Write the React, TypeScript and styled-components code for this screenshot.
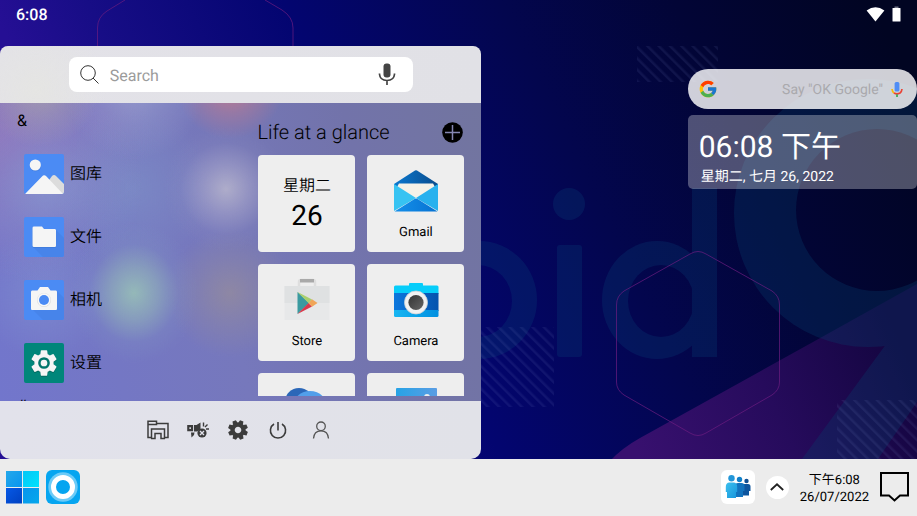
import React from 'react';
import styled, { createGlobalStyle } from 'styled-components';
import { FcGoogle } from 'react-icons/fc';
import { MdSettings } from 'react-icons/md';

const GlobalStyle = createGlobalStyle`
  * { box-sizing: border-box; }
  body {
    margin: 0;
    font-family: Roboto, "Noto Sans CJK SC", sans-serif;
    text-rendering: geometricPrecision;
    color: #000;
  }
  button, input { font: inherit; color: inherit; text-rendering: inherit; }
  button { border: 0; padding: 0; background: none; cursor: pointer; }
  svg { display: block; }
`;

const Desktop = styled.div`
  position: relative;
  display: flex;
  flex-direction: column;
  height: 100vh;
  overflow: hidden;
  background: #04054f;
`;

const WallpaperLayer = styled.div`
  position: absolute;
  inset: 0;
  svg { width: 100%; height: 100%; }
`;

const StatusBar = styled.header`
  position: relative;
  display: flex;
  justify-content: space-between;
  align-items: center;
  height: 28px;
  padding: 0 16px;
  color: #fff;
  font-size: 16px;
  font-weight: 500;
`;

const StatusIcons = styled.div`
  display: flex;
  align-items: center;
  gap: 7px;
`;

const Workspace = styled.main`
  position: relative;
  flex: 1;
  min-height: 0;
  display: flex;
  justify-content: space-between;
  padding-top: 18px;
`;

const StartMenu = styled.section`
  display: flex;
  flex-direction: column;
  width: 52.5%;
  min-width: 400px;
  border-radius: 8px 8px 10px 10px;
  overflow: hidden;
`;

const MenuHeader = styled.div`
  display: flex;
  justify-content: center;
  padding: 11px 16px;
  background:
    radial-gradient(circle at 36px 44px, #e5e5e3 0, transparent 70px),
    linear-gradient(90deg, #e3e2e8, #e1e1e6);
`;

const SearchBox = styled.label`
  display: flex;
  align-items: center;
  width: 344px;
  height: 35px;
  padding: 0 17px 0 11px;
  border-radius: 8px;
  background: #fff;
`;

const SearchInput = styled.input`
  flex: 1;
  min-width: 0;
  margin-left: 10px;
  padding: 2px 0 0;
  border: 0;
  outline: 0;
  background: none;
  font-size: 16px;
  &::placeholder { color: #9b9b9b; opacity: 1; }
`;

const MenuBody = styled.div`
  flex: 1;
  min-height: 0;
  display: flex;
  justify-content: space-between;
  background:
    radial-gradient(circle at 40px -16px, rgba(176, 170, 168, 0.7) 0, rgba(176, 170, 168, 0.3) 32px, rgba(176, 170, 168, 0) 60px),
    radial-gradient(circle at 134px -14px, rgba(160, 165, 208, 0.7) 0, rgba(160, 165, 208, 0.3) 36px, rgba(160, 165, 208, 0) 70px),
    radial-gradient(circle at 230px -18px, rgba(210, 124, 136, 0.85) 0, rgba(200, 124, 140, 0.4) 28px, rgba(200, 124, 140, 0) 54px),
    radial-gradient(circle at 226px 86px, rgba(180, 178, 204, 0.9) 0, rgba(174, 172, 204, 0.5) 24px, rgba(150, 150, 196, 0.15) 46px, rgba(150, 150, 196, 0) 62px),
    radial-gradient(ellipse 64px 70px at 134px 190px, rgba(150, 188, 184, 0.95) 0, rgba(146, 180, 186, 0.6) 38%, rgba(132, 156, 196, 0.2) 70%, rgba(132, 156, 196, 0) 100%),
    radial-gradient(circle at 230px 190px, rgba(146, 138, 160, 0.85) 0, rgba(146, 138, 160, 0.4) 32px, rgba(146, 138, 160, 0) 64px),
    radial-gradient(circle at 46px 84px, rgba(136, 160, 212, 0.6) 0, rgba(136, 160, 212, 0.2) 48px, rgba(136, 160, 212, 0) 96px),
    radial-gradient(circle at 134px 86px, rgba(126, 146, 200, 0.6) 0, rgba(126, 146, 200, 0) 80px),
    radial-gradient(circle at 44px 192px, rgba(132, 150, 212, 0.5) 0, rgba(132, 150, 212, 0) 64px),
    radial-gradient(circle at 0 30px, rgba(150, 118, 186, 0.8) 0, rgba(150, 118, 186, 0) 150px),
    linear-gradient(75deg, #7276cc 0%, #7678bc 45%, #7273aa 75%, #72759f 100%);
`;

const AppList = styled.div`
  flex: 1;
  min-width: 0;
  overflow: hidden;
`;

const GroupLabel = styled.h2`
  margin: 0;
  padding-left: 17px;
  line-height: 36px;
  font-size: 16px;
  font-weight: 400;
`;

const AppGroup = styled.ul`
  display: flex;
  flex-direction: column;
  gap: 23px;
  margin: 0;
  padding: 15px 24px 5px;
  list-style: none;
`;

const AppEntry = styled.button`
  display: flex;
  align-items: center;
  gap: 6px;
  font-size: 16px;
  font-weight: 350;
  line-height: 40px;
`;

const GlanceSection = styled.section`
  display: flex;
  flex-direction: column;
  width: 224px;
  padding: 14px 18px 5px 0;
`;

const GlanceHeader = styled.div`
  display: flex;
  align-items: center;
  justify-content: space-between;
  flex: none;
  height: 30px;
  margin-bottom: 8px;
`;

const GlanceTitle = styled.h2`
  margin: 0;
  font-size: 20px;
  font-weight: 350;
`;

const TileGrid = styled.div`
  flex: 1;
  min-height: 0;
  display: grid;
  grid-template-columns: 1fr 1fr;
  grid-auto-rows: 97px;
  gap: 12px;
  margin: 0 -1px 0 1px;
  overflow: hidden;
`;

const Tile = styled.button`
  display: flex;
  flex-direction: column;
  align-items: center;
  justify-content: flex-start;
  padding-top: 13px;
  border-radius: 4px;
  background: #eee;
  font-size: 13px;
`;

const TileLabel = styled.span`
  margin-top: 11px;
  line-height: 16px;
`;

const TileWeekday = styled.span`
  margin-top: 6px;
  line-height: 24px;
  font-size: 16px;
  font-weight: 350;
`;

const TileDay = styled.span`
  line-height: 36px;
  font-size: 28px;
  font-weight: 400;
`;

const MenuFooter = styled.nav`
  display: flex;
  align-items: center;
  gap: 18px;
  height: 58px;
  padding-left: 147px;
  color: #3c3c3c;
  background: linear-gradient(90deg, #e2e2eb, #e1e2e8);
`;

const FooterButton = styled.button<{ $wide?: boolean }>`
  display: flex;
  justify-content: center;
  width: ${(p) => (p.$wide ? 28 : 22)}px;
`;

const Widgets = styled.aside`
  display: flex;
  flex-direction: column;
  gap: 6px;
  width: 25%;
  min-width: 210px;
  padding-top: 23px;
`;

const GooglePill = styled.label`
  display: flex;
  align-items: center;
  height: 40px;
  padding: 0 14px 0 10px;
  border-radius: 20px;
  background: rgba(255, 255, 255, 0.81);
`;

const GoogleInput = styled.input`
  flex: 1;
  min-width: 0;
  padding: 2px 8px 0 0;
  border: 0;
  outline: 0;
  background: none;
  font-size: 14px;
  text-align: right;
  &::placeholder { color: #aaa9ad; opacity: 1; }
`;

const ClockCard = styled.div`
  height: 74px;
  padding: 13px 11px 0;
  border-radius: 5px;
  color: #fff;
  background: rgba(255, 255, 255, 0.3);
`;

const ClockTime = styled.div`
  line-height: 40px;
  font-size: 30px;
  font-weight: 400;
`;

const ClockDate = styled.div`
  padding-left: 2px;
  line-height: 18px;
  font-size: 14px;
`;

const Taskbar = styled.footer`
  position: relative;
  display: flex;
  align-items: center;
  justify-content: space-between;
  flex: none;
  height: 57px;
  padding: 0 8px 1px 6px;
  background: #ececec;
`;

const TaskGroup = styled.div<{ $gap: number }>`
  display: flex;
  align-items: center;
  gap: ${(p) => p.$gap}px;
`;

const WhiteButton = styled.button<{ $size: number; $radius: number }>`
  display: flex;
  align-items: center;
  justify-content: center;
  width: ${(p) => p.$size}px;
  height: ${(p) => p.$size}px;
  border-radius: ${(p) => p.$radius}px;
  background: #fff;
`;

const TaskClock = styled.div`
  padding-top: 3px;
  text-align: center;
  font-size: 13px;
  line-height: 17px;
`;

const Wallpaper = () => (
  <svg viewBox="0 0 917 516" preserveAspectRatio="xMidYMid slice" aria-hidden="true">
    <defs>
      <linearGradient id="base" gradientUnits="userSpaceOnUse" x1="0" y1="230" x2="800" y2="-150">
        <stop offset="0.1" stopColor="#250f94" />
        <stop offset="0.2" stopColor="#170d86" />
        <stop offset="0.4" stopColor="#030570" />
        <stop offset="0.62" stopColor="#03064e" />
        <stop offset="0.8" stopColor="#020536" />
        <stop offset="1" stopColor="#010522" />
      </linearGradient>
      <linearGradient id="beam" gradientUnits="userSpaceOnUse" x1="640" y1="459" x2="900" y2="340">
        <stop offset="0" stopColor="#38106f" />
        <stop offset="0.5" stopColor="#260b5c" />
        <stop offset="1" stopColor="#13053f" />
      </linearGradient>
      <pattern id="hatch" width="8" height="8" patternUnits="userSpaceOnUse" patternTransform="rotate(-45)">
        <rect width="2.500" height="8" fill="#7f8fd0" />
      </pattern>
      <mask id="nine">
        <circle cx="868" cy="213" r="134" fill="#fff" />
        <path d="M884 347L917 300V402L878 459H802Z" fill="#fff" />
        <circle cx="877" cy="210" r="81" fill="#000" />
      </mask>
      <mask id="letters">
        <ellipse cx="479" cy="300" rx="58" ry="59" fill="#fff" />
        <ellipse cx="478" cy="301" rx="34" ry="36" fill="#000" />
        <ellipse cx="657" cy="300" rx="55" ry="59" fill="#fff" />
        <ellipse cx="661" cy="301" rx="33" ry="36" fill="#000" />
        <rect x="692" y="188" width="25" height="169" fill="#fff" />
        <rect x="557" y="245" width="25" height="112" rx="3" fill="#fff" />
        <circle cx="569" cy="204" r="16" fill="#fff" />
      </mask>
    </defs>
    <rect width="917" height="516" fill="url(#base)" />
    <path d="M610 461Q622 448 640 438L813 342L917 284V461Z" fill="url(#beam)" />
    <rect width="917" height="516" fill="#084078" opacity="0.28" mask="url(#letters)" />
    <rect width="917" height="516" fill="#06406e" opacity="0.3" mask="url(#nine)" />
    <g fill="none" stroke="#6c1d80" strokeOpacity="0.7" strokeWidth="1">
      <path d="M616.500 382V305Q616.500 296 624 291L690 254Q698 249 706 254L772 291Q779.500 296 779.500 305V382Q779.500 390 772 395L706 433Q698 438 690 433L624 395Q616.500 390 616.500 382Z" />
      <path d="M125 0L107 11Q97.500 17 97.500 28V60M265 0L282 10Q293 17 293 28V60" />
    </g>
    <g fill="url(#hatch)" opacity="0.11">
      <rect x="637" y="46" width="81" height="36" />
      <rect x="480" y="327" width="74" height="80" />
      <rect x="837" y="400" width="80" height="60" />
    </g>
  </svg>
);

const WifiIcon = () => (
  <svg width="19" height="15" viewBox="0 0 19 15" fill="#fff"><path d="M9.500 14.500L.6 3.600Q9.500-3.200 18.400 3.600Z" /></svg>
);
const BatteryIcon = () => (
  <svg width="9" height="16" viewBox="0 0 9 16" fill="#fff"><path d="M2.500 .5h4v1.500h-4z" opacity=".45" /><rect x=".5" y="2" width="8" height="13.500" rx=".6" /></svg>
);
const SearchIcon = () => (
  <svg width="20" height="20" viewBox="0 0 20 20" fill="none" stroke="#333" strokeWidth="1"><circle cx="8" cy="8" r="7.300" /><path d="M13 13l5.500 5.500" /></svg>
);
const MicIcon = () => (
  <svg width="18" height="23" viewBox="0 0 18 23"><rect x="5.500" y=".5" width="7" height="14" rx="3" fill="#444" /><path d="M1.500 10.500v.8Q2 17.500 9 17.500T16.500 11.300v-.8M9 17.500V22" fill="none" stroke="#444" strokeWidth="1.700" /></svg>
);
const GoogleMic = () => (
  <svg width="12" height="17" viewBox="0 0 12 17" fill="none" strokeWidth="1.700">
    <rect x="3.600" y="1" width="4.800" height="9.500" rx="1.500" fill="#4f8df5" />
    <path d="M1 8Q1.200 10.500 3 12" stroke="#f9b806" /><path d="M3 12Q6 13.700 9 12Q10.800 10.500 11 8" stroke="#ea4335" /><path d="M6 13.300V16" stroke="#34a853" />
  </svg>
);
const PlusIcon = () => (
  <svg width="21" height="21" viewBox="0 0 21 21"><circle cx="10.500" cy="10.500" r="10.300" fill="#000" /><path d="M10.500 3v15M3 10.500h15" stroke="#8586b2" strokeWidth="1.500" /></svg>
);

const GalleryIcon = () => (
  <svg width="40" height="40" viewBox="0 0 40 40">
    <defs><clipPath id="galleryClip"><rect width="40" height="40" rx="2" /></clipPath></defs>
    <g clipPath="url(#galleryClip)">
      <rect width="40" height="40" fill="#4b8bf4" />
      <circle cx="11.500" cy="11.700" r="5.600" fill="#3b78dc" /><circle cx="11.300" cy="11" r="5.600" fill="#f5f5f5" />
      <path d="M18 36L28 22Q30 20 32 22L40 30V40H20Z" fill="#dcdcdc" />
      <path d="M1 40L18 22.500Q20 20 22.500 22.500L39 40Z" fill="#f5f5f5" />
    </g>
  </svg>
);
const FilesIcon = () => (
  <svg width="40" height="40" viewBox="0 0 40 40">
    <rect width="40" height="40" rx="2" fill="#4b8bf4" />
    <path d="M9 30L32 13L40 21V38Q40 40 38 40H19Z" fill="#4784ea" />
    <path d="M10 10H18L20 12.500H31Q32 12.500 32 14V29Q32 30.500 31 30.500H10Q8.500 30.500 8.500 29V11.500Q8.500 10 10 10Z" fill="#3b74d0" />
    <path d="M10 9.600H18L20 12H31Q32 12 32 13.500V28.500Q32 30 31 30H10Q8.500 30 8.500 28.500V11Q8.500 9.600 10 9.600Z" fill="#f5f5f5" />
  </svg>
);
const PhotoIcon = () => (
  <svg width="40" height="40" viewBox="0 0 40 40">
    <rect width="40" height="40" rx="2" fill="#4b8bf4" />
    <path d="M8 29L33 11L40 18V38Q40 40 38 40H19Z" fill="#4784ea" />
    <path d="M8 10.500H13.500L16 7H24L26.500 10.500H32Q33 10.500 33 12V28.500Q33 30 32 30H8Q7 30 7 28.500V12Q7 10.500 8 10.500Z" fill="#f5f5f5" />
    <circle cx="20" cy="20" r="7" fill="#dcdcdc" /><circle cx="20" cy="19.800" r="6.500" fill="#f8f8f8" /><circle cx="20" cy="20" r="5" fill="#4b8bf4" />
  </svg>
);
const SettingsBox = styled.span`
  display: flex;
  align-items: center;
  justify-content: center;
  width: 40px;
  height: 40px;
  border-radius: 2px;
  background: #00867a;
`;
const SettingsIcon = () => (
  <SettingsBox>
    <svg width="34" height="34" viewBox="0 0 34 34">
      <MdSettings x="1" y="2" size={32} color="#04695f" />
      <MdSettings x="1" y="1" size={32} color="#f5f5f5" />
      <circle cx="17" cy="17" r="4.600" fill="#f5f5f5" stroke="#00756b" strokeWidth="2.500" />
    </svg>
  </SettingsBox>
);

const MailIcon = () => (
  <svg width="46" height="46" viewBox="0 0 46 46">
    <defs>
      <linearGradient id="mailTop" x1="0" x2="1"><stop stopColor="#0a78cf" /><stop offset="1" stopColor="#0b4c8c" /></linearGradient>
      <linearGradient id="mailBottom" x1="0" x2="1"><stop stopColor="#1590ea" /><stop offset="1" stopColor="#0672d2" /></linearGradient>
    </defs>
    <path d="M1 16L22 2.500Q23 2 24 2.500L45 16V24H1Z" fill="url(#mailTop)" />
    <path d="M6 15.500H40L42 19L24 32H22L4 19Z" fill="#f5f2e8" />
    <path d="M1 16L23 30L1 43Z" fill="#37c3f2" /><path d="M45 16L23 30L45 43Z" fill="#28b1ee" />
    <path d="M1.500 43.500L21.500 31Q23 30 24.500 31L44.500 43.500Z" fill="url(#mailBottom)" />
  </svg>
);
const StoreIcon = () => (
  <svg width="46" height="46" viewBox="0 0 46 46">
    <path d="M15 9V5Q15 3 17 3H29Q31 3 31 5V9" fill="none" stroke="#dedede" strokeWidth="2.500" /><rect x="16" y="2" width="14" height="3.500" fill="#a9a9a9" />
    <rect x=".5" y="9" width="45" height="34" fill="#e7e8e9" /><rect x=".5" y="9" width="45" height="17" fill="#dfe1e2" />
    <path d="M13.500 15L25 26L13.500 37Z" fill="#3a9aa0" /><path d="M13.500 15L28 22.500L24.500 26Z" fill="#a9cf6d" /><path d="M13.500 37L28 29.500L24.500 26Z" fill="#d8394c" /><path d="M28 22.300L33.500 26L28 29.700L24.500 26Z" fill="#f0a558" />
  </svg>
);
const CameraIcon = () => (
  <svg width="46" height="46" viewBox="0 0 46 46">
    <defs>
      <linearGradient id="camMid" x1="0" x2="1"><stop stopColor="#0b77dd" /><stop offset="1" stopColor="#0453ae" /></linearGradient>
      <linearGradient id="camLow" x1="0" x2="1"><stop stopColor="#18b6f2" /><stop offset="1" stopColor="#008fe0" /></linearGradient>
      <linearGradient id="camLens" x1="0" y1="0" x2="1" y2="1"><stop stopColor="#333" /><stop offset="1" stopColor="#666" /></linearGradient>
    </defs>
    <path d="M1 10Q1 8.500 2.500 8.500H16V7Q16 6 17 6H29Q30 6 30 7V8.500H44Q45.500 8.500 45.500 10V17H1Z" fill="#06cdfa" />
    <rect x="1" y="16" width="44.500" height="18" fill="url(#camMid)" />
    <path d="M1 33H45.500V38.500Q45.500 40 44 40H2.500Q1 40 1 38.500Z" fill="url(#camLow)" />
    <circle cx="23" cy="25.500" r="11.500" fill="#f2f2f2" /><circle cx="23" cy="25.500" r="11.500" fill="none" stroke="#c9d0d5" strokeWidth=".8" /><circle cx="23" cy="25.500" r="7.600" fill="url(#camLens)" />
  </svg>
);
const CloudIcon = () => (
  <svg width="46" height="46" viewBox="0 0 46 46"><circle cx="15" cy="16" r="14" fill="#2b67b8" /><circle cx="26" cy="23" r="18" fill="#529fea" /><rect x="2" y="24" width="42" height="16" rx="8" fill="#2f7ed6" /></svg>
);
const PicturesIcon = () => (
  <svg width="46" height="46" viewBox="0 0 46 46">
    <defs><linearGradient id="pics" x1="0" x2="1"><stop stopColor="#27a3e6" /><stop offset="1" stopColor="#5a9de4" /></linearGradient></defs>
    <rect x="3" y="2" width="41" height="36" rx="1" fill="url(#pics)" /><circle cx="34" cy="11" r="3" fill="#eee" /><path d="M3 38L18 18L34 38Z" fill="#1565b8" />
  </svg>
);

const FolderIcon = () => (
  <svg width="22" height="20" viewBox="0 0 22 20" fill="none" stroke="currentColor" strokeWidth="1.500">
    <path d="M1 1.200H9.500V4.500H1ZM1 4.500V17.500H4.500M9.500 3.500H21V17.500H17.500M4.500 18.800V9H17.500V18.800M4 18.500H8V13.500H14V18.500H18" />
  </svg>
);
const MutedIcon = () => (
  <svg width="22" height="18" viewBox="0 0 22 18" fill="none" stroke="currentColor">
    <path d="M1.300 5.200H5V9.200H1.300Z" strokeWidth="2.200" />
    <path d="M7 4L9.500 4L13.500 1.500V8.500L10 10.500H7Z" fill="currentColor" stroke="none" />
    <path d="M4 11.500H7.500L7 14L4.500 16.500Z" fill="currentColor" stroke="none" />
    <circle cx="15" cy="12" r="4.600" fill="currentColor" stroke="none" />
    <path d="M13 10L17 14M17 10L13 14" stroke="#e2e2ea" strokeWidth="1.300" />
    <path d="M16.500 1.500V5.500M18 6L20.500 3.500M19 8H22" strokeWidth="1.400" />
  </svg>
);
const GearIcon = () => (
  <svg width="20" height="20" viewBox="-10 -10 20 20" fill="none" stroke="currentColor">
    <circle r="5.400" strokeWidth="4.200" />
    {[0, 45, 90, 135, 180, 225, 270, 315].map((angle) => (
      <path key={angle} d="M-2.600-6.500L-1.800-9.900H1.800L2.600-6.500Z" transform={`rotate(${angle + 22})`} fill="currentColor" stroke="none" />
    ))}
  </svg>
);
const PowerIcon = () => (
  <svg width="18" height="18" viewBox="0 0 18 18" fill="none" stroke="currentColor" strokeWidth="1.600"><path d="M9 1V9.500M5 3A7.600 7.600 0 1 0 13 3" /></svg>
);
const PersonIcon = () => (
  <svg width="18" height="18" viewBox="0 0 18 18" fill="none" stroke="#555" strokeWidth="1.300"><circle cx="9" cy="5.300" r="4.300" /><path d="M1.500 17.500Q2 9.800 9 9.800T16.500 17.500" /></svg>
);

const WindowsIcon = () => (
  <svg width="34" height="34" viewBox="0 0 34 34">
    <defs>
      <linearGradient id="w1" x1="0" y1="0" x2="1" y2="1"><stop stopColor="#24a8ea" /><stop offset="1" stopColor="#0995ef" /></linearGradient>
      <linearGradient id="w2" x1="0" y1="0" x2="1" y2="1"><stop stopColor="#05c7f6" /><stop offset="1" stopColor="#00e2fd" /></linearGradient>
      <linearGradient id="w3" x1="0" y1="0" x2="1" y2="1"><stop stopColor="#0659e6" /><stop offset="1" stopColor="#0040c0" /></linearGradient>
      <linearGradient id="w4" x1="0" y1="0" x2="1" y2="1"><stop stopColor="#0794ed" /><stop offset="1" stopColor="#06a8ec" /></linearGradient>
    </defs>
    <rect x="0" y="1" width="16" height="16" fill="url(#w1)" /><rect x="17" y="1" width="16" height="16" fill="url(#w2)" />
    <rect x="0" y="18" width="16" height="15.500" fill="url(#w3)" /><rect x="17" y="18" width="16" height="15.500" fill="url(#w4)" />
  </svg>
);
const AssistantIcon = () => (
  <svg width="34" height="34" viewBox="0 0 34 34"><rect width="34" height="34" rx="6" fill="#06a5f0" /><circle cx="17" cy="17" r="14.700" fill="#6ccbf7" /><circle cx="17" cy="17" r="9.500" fill="#06a5f0" stroke="#fff" strokeWidth="5" /></svg>
);
const PeopleIcon = () => (
  <svg width="26" height="24" viewBox="0 0 26 24">
    <defs><linearGradient id="person1" x1="0" y1="0" x2="1" y2="1"><stop stopColor="#3cc0ee" /><stop offset="1" stopColor="#1795dc" /></linearGradient></defs>
    <circle cx="21.500" cy="6" r="2.200" fill="#0e4f94" /><path d="M17 11.500Q17 9 19.500 9H23Q25.500 9 25.500 11.500V16H24V20.500H17Z" fill="#0d559e" />
    <circle cx="14.500" cy="4.500" r="2.700" fill="#1180c9" /><path d="M10 11Q10 8 13 8H16.500Q19.500 8 19.500 11V16H18V22H10Z" fill="#1273be" />
    <circle cx="6.500" cy="3.300" r="3.200" fill="#2296d8" /><path d="M.8 12Q.8 7.500 4.500 7.500H8.500Q12.200 7.500 12.200 12V17H11V23H2V17H.8Z" fill="url(#person1)" />
  </svg>
);
const ChevronUp = () => (
  <svg width="14" height="8" viewBox="0 0 14 8" fill="none" stroke="#222" strokeWidth="1.800"><path d="M.8 7L7 1.300L13.200 7" /></svg>
);
const NotificationIcon = () => (
  <svg width="29" height="30" viewBox="0 0 29 30" fill="none" stroke="#000" strokeWidth="2"><path d="M1 1H28V23.500H20L14.500 28.500L9 23.500H1Z" /></svg>
);

const apps = [
  { name: '图库', icon: <GalleryIcon /> },
  { name: '文件', icon: <FilesIcon /> },
  { name: '相机', icon: <PhotoIcon /> },
  { name: '设置', icon: <SettingsIcon /> },
];

const tiles = [
  { name: 'Gmail', icon: <MailIcon /> },
  { name: 'Store', icon: <StoreIcon /> },
  { name: 'Camera', icon: <CameraIcon /> },
];

export default function App() {
  return (
    <Desktop>
      <GlobalStyle />
      <WallpaperLayer><Wallpaper /></WallpaperLayer>
      <StatusBar>
        <span>6:08</span>
        <StatusIcons><WifiIcon /><BatteryIcon /></StatusIcons>
      </StatusBar>
      <Workspace>
        <StartMenu>
          <MenuHeader>
            <SearchBox>
              <SearchIcon />
              <SearchInput type="text" placeholder="Search" aria-label="Search" />
              <MicIcon />
            </SearchBox>
          </MenuHeader>
          <MenuBody>
            <AppList>
              <GroupLabel>&amp;</GroupLabel>
              <AppGroup>
                {apps.map((app) => (
                  <li key={app.name}><AppEntry>{app.icon}{app.name}</AppEntry></li>
                ))}
              </AppGroup>
              <GroupLabel>#</GroupLabel>
            </AppList>
            <GlanceSection>
              <GlanceHeader>
                <GlanceTitle>Life at a glance</GlanceTitle>
                <button aria-label="Add tile"><PlusIcon /></button>
              </GlanceHeader>
              <TileGrid>
                <Tile>
                  <TileWeekday>星期二</TileWeekday>
                  <TileDay>26</TileDay>
                </Tile>
                {tiles.map((tile) => (
                  <Tile key={tile.name}>{tile.icon}<TileLabel>{tile.name}</TileLabel></Tile>
                ))}
                <Tile aria-label="Cloud storage"><CloudIcon /></Tile>
                <Tile aria-label="Pictures"><PicturesIcon /></Tile>
              </TileGrid>
            </GlanceSection>
          </MenuBody>
          <MenuFooter>
            <FooterButton aria-label="Files"><FolderIcon /></FooterButton>
            <FooterButton aria-label="Sound"><MutedIcon /></FooterButton>
            <FooterButton aria-label="Settings"><GearIcon /></FooterButton>
            <FooterButton aria-label="Power"><PowerIcon /></FooterButton>
            <FooterButton aria-label="Account" $wide><PersonIcon /></FooterButton>
          </MenuFooter>
        </StartMenu>
        <Widgets>
          <GooglePill>
            <FcGoogle size={20} />
            <GoogleInput type="text" placeholder={'Say "OK Google"'} aria-label="Google search" />
            <GoogleMic />
          </GooglePill>
          <ClockCard>
            <ClockTime>06:08 下午</ClockTime>
            <ClockDate>星期二, 七月 26, 2022</ClockDate>
          </ClockCard>
        </Widgets>
      </Workspace>
      <Taskbar>
        <TaskGroup $gap={6}>
          <button aria-label="Start"><WindowsIcon /></button>
          <button aria-label="Assistant"><AssistantIcon /></button>
        </TaskGroup>
        <TaskGroup $gap={11}>
          <WhiteButton $size={34} $radius={6} aria-label="People"><PeopleIcon /></WhiteButton>
          <WhiteButton $size={23} $radius={12} aria-label="Show hidden icons"><ChevronUp /></WhiteButton>
          <TaskClock>下午6:08<br />26/07/2022</TaskClock>
          <button aria-label="Notifications"><NotificationIcon /></button>
        </TaskGroup>
      </Taskbar>
    </Desktop>
  );
}
